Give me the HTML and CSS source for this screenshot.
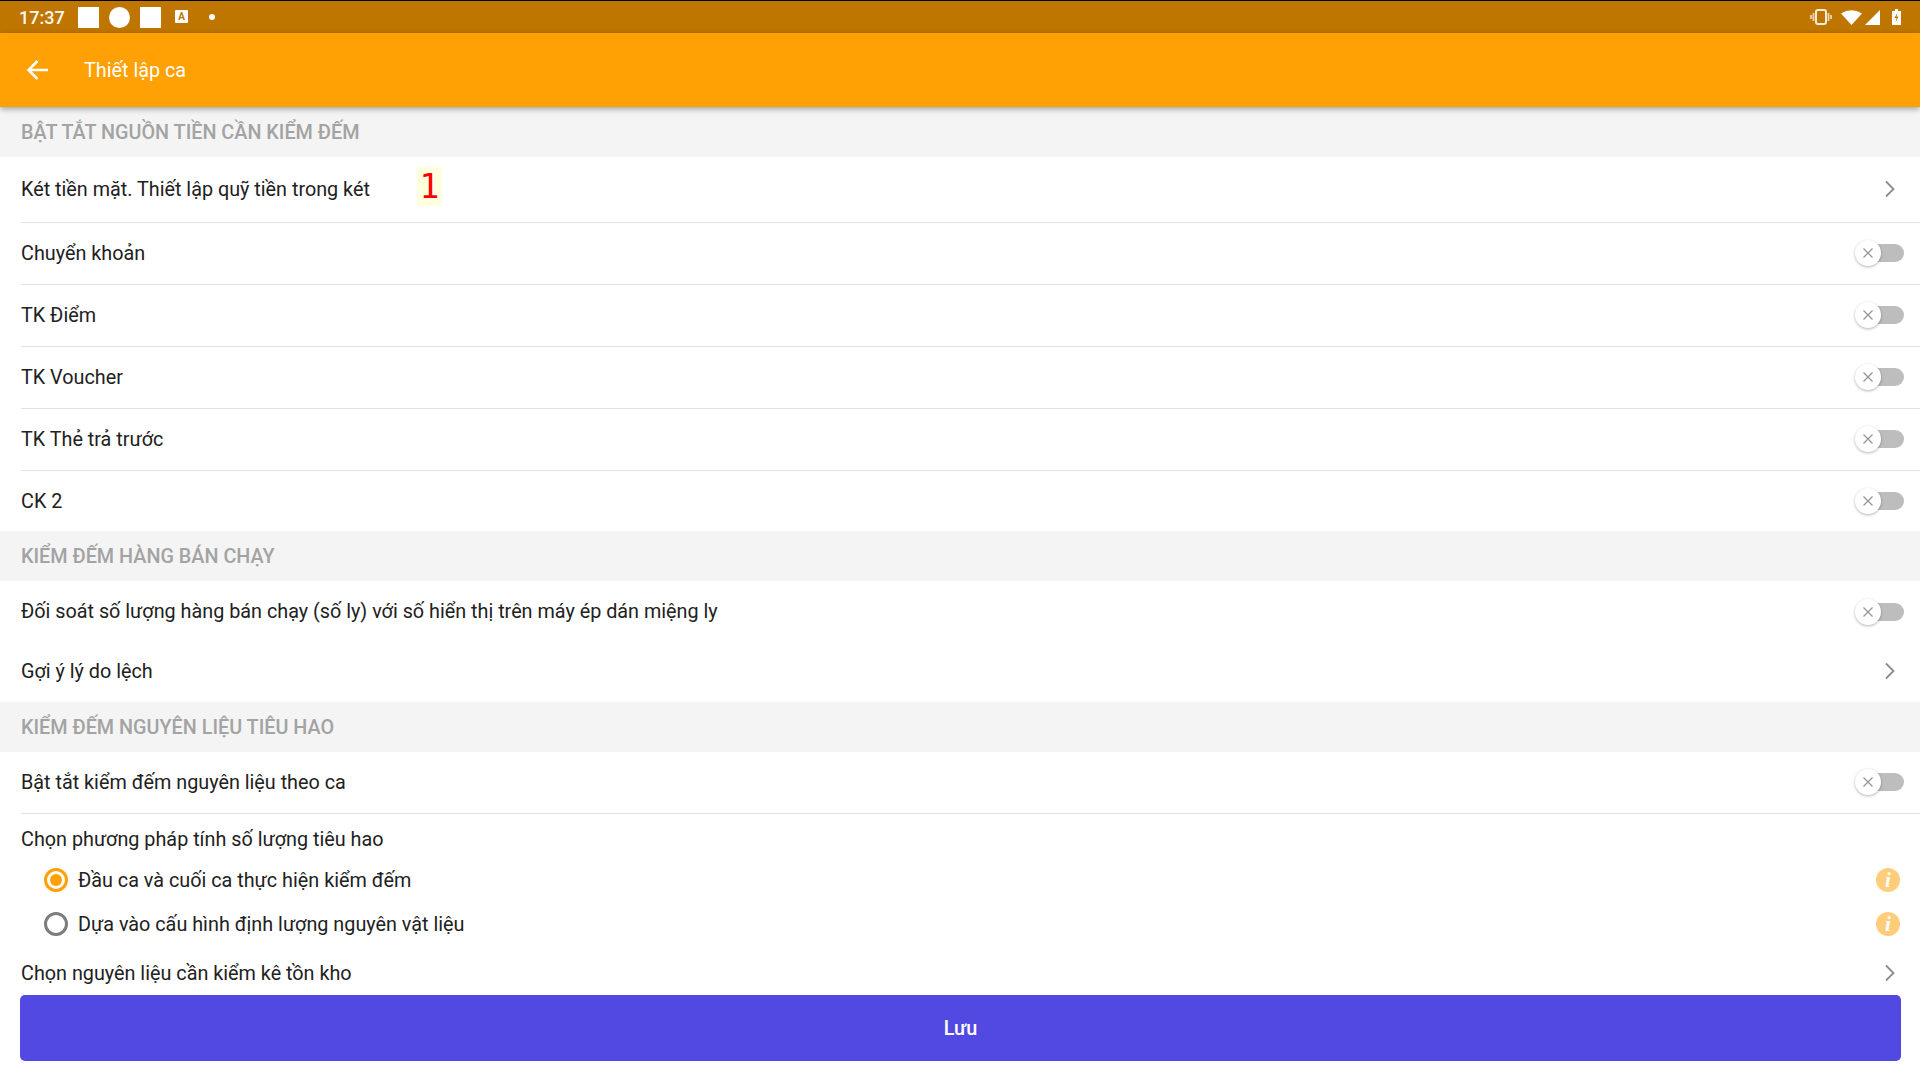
FILE: index.html
```html
<!DOCTYPE html>
<html lang="vi">
<head>
<meta charset="utf-8">
<title>Thiết lập ca</title>
<link rel="stylesheet" href="styles.css">
</head>
<body>
<svg class="defs" width="0" height="0">
  <symbol id="x" viewBox="0 0 12 12"><path d="M1.500 1.500l9 9M10.500 1.500l-9 9" stroke="#969696" stroke-width="1.300" fill="none"/></symbol>
  <symbol id="chev" viewBox="0 0 12 18"><path d="M2 1.500 9.500 9 2 16.500" fill="none" stroke="#8c8c8c" stroke-width="1.800"/></symbol>
</svg>
<div class="screen">
  <div class="status">
    <span class="time">17:37</span>
    <span class="sq"></span><span class="sq round"></span><span class="sq"></span>
    <svg class="s-a" viewBox="0 0 14 14" width="14" height="14"><rect width="13" height="13" rx="1" fill="#fff"/><text x="6.5" y="9.5" class="a-glyph">A</text></svg>
    <span class="dot"></span>
    <span class="status-right">
      <svg width="22" height="16" viewBox="0 0 22 16"><rect x="6" y="1" width="10" height="14" rx="2" fill="none" stroke="#fff" stroke-width="2" opacity=".85"/><path d="M3.500 4v8M1 6v4M18.500 4v8M21 6v4" stroke="#fff" stroke-width="1.800" opacity=".7"/></svg>
      <svg class="wifi" width="21" height="15" viewBox="0 0 21 15"><path d="M0 3.500Q10.500-3 21 3.500L10.500 15Z" fill="#fff"/></svg>
      <svg class="signal" width="15" height="15" viewBox="0 0 15 15"><path d="M15 0V15H0Z" fill="#fff"/></svg>
      <svg class="batt" width="9" height="16" viewBox="0 0 9 16"><path d="M3 0h3v2h3v14H0V2h3Z" fill="#fff"/><path d="M5.500 3.500 2.500 9H4.500l-1 4.500 3-6H4.500Z" fill="#bf7600"/></svg>
    </span>
  </div>
  <header class="appbar">
    <svg class="back" width="24" height="24" viewBox="0 0 24 24"><path d="M23 12H4M12.500 3l-9 9 9 9" fill="none" stroke="#fff" stroke-width="2.600"/></svg>
    <span class="title">Thiết lập ca</span>
  </header>
  <main class="content">
    <div class="section">BẬT TẮT NGUỒN TIỀN CẦN KIỂM ĐẾM</div>
    <div class="row h66 line">
      <span class="label">Két tiền mặt. Thiết lập quỹ tiền trong két</span>
      <span class="badge">1</span>
      <svg class="chev" width="12" height="18"><use href="#chev"/></svg>
    </div>
    <div class="row h62 line"><span class="label">Chuyển khoản</span><span class="toggle"><span class="knob"><svg width="12" height="12"><use href="#x"/></svg></span></span></div>
    <div class="row h62 line"><span class="label">TK Điểm</span><span class="toggle"><span class="knob"><svg width="12" height="12"><use href="#x"/></svg></span></span></div>
    <div class="row h62 line"><span class="label">TK Voucher</span><span class="toggle"><span class="knob"><svg width="12" height="12"><use href="#x"/></svg></span></span></div>
    <div class="row h62 line"><span class="label">TK Thẻ trả trước</span><span class="toggle"><span class="knob"><svg width="12" height="12"><use href="#x"/></svg></span></span></div>
    <div class="row h60 flat"><span class="label">CK 2</span><span class="toggle"><span class="knob"><svg width="12" height="12"><use href="#x"/></svg></span></span></div>
    <div class="section">KIỂM ĐẾM HÀNG BÁN CHẠY</div>
    <div class="row h61 flat"><span class="label">Đối soát số lượng hàng bán chạy (số ly) với số hiển thị trên máy ép dán miệng ly</span><span class="toggle"><span class="knob"><svg width="12" height="12"><use href="#x"/></svg></span></span></div>
    <div class="row h60">
      <span class="label">Gợi ý lý do lệch</span>
      <svg class="chev" width="12" height="18"><use href="#chev"/></svg>
    </div>
    <div class="section">KIỂM ĐẾM NGUYÊN LIỆU TIÊU HAO</div>
    <div class="row h62 line"><span class="label">Bật tắt kiểm đếm nguyên liệu theo ca</span><span class="toggle"><span class="knob"><svg width="12" height="12"><use href="#x"/></svg></span></span></div>
    <div class="group-title">Chọn phương pháp tính số lượng tiêu hao</div>
    <div class="radio-row"><span class="radio on"></span><span class="label">Đầu ca và cuối ca thực hiện kiểm đếm</span><span class="info">i</span></div>
    <div class="radio-row"><span class="radio"></span><span class="label">Dựa vào cấu hình định lượng nguyên vật liệu</span><span class="info">i</span></div>
    <div class="row last">
      <span class="label">Chọn nguyên liệu cần kiểm kê tồn kho</span>
      <svg class="chev" width="12" height="18"><use href="#chev"/></svg>
    </div>
  </main>
  <div class="footer"><button class="save">Lưu</button></div>
</div>
</body>
</html>
```

FILE: styles.css
```css
* { box-sizing: border-box; }
html, body { margin: 0; padding: 0; }
body { font-family: Roboto, "Noto Sans", sans-serif; background: #fff; color: #212121; }
.defs { position: absolute; }
.screen { width: 1920px; height: 1079px; display: flex; flex-direction: column; overflow: hidden; }

.status { height: 33px; flex: none; background: #bf7600; border-top: 1px solid #000; display: flex; align-items: center; padding-left: 19px; color: #fff; }
.time { font-size: 18px; font-weight: 500; width: 59px; opacity: .95; }
.sq { width: 21px; height: 21px; background: #fff; margin-right: 10px; flex: none; }
.round { border-radius: 50%; }
.s-a { margin-left: 4px; flex: none; }
.a-glyph { font: 700 10px Roboto, sans-serif; fill: #bf7600; text-anchor: middle; }
.dot { width: 6px; height: 6px; border-radius: 50%; background: #fff; margin-left: 20px; }
.status-right { margin-left: auto; display: flex; align-items: center; padding-right: 19px; }
.wifi { margin-left: 9px; }
.signal { margin-left: 3px; }
.batt { margin-left: 12px; }

.appbar { height: 74px; flex: none; background: #ffa005; display: flex; align-items: center; padding-left: 25px; box-shadow: 0 2px 6px rgba(0,0,0,.35); position: relative; z-index: 1; color: #fff; }
.title { font-size: 19.8px; margin-left: 35px; }

.content { flex: 1; display: flex; flex-direction: column; min-height: 0; }
.section { height: 50px; flex: none; background: #f4f4f4; color: #a3a3a3; font-size: 19.8px; font-weight: 500; display: flex; align-items: center; padding-left: 21px; }
.row { flex: none; display: flex; align-items: center; padding: 0 16px 2px 21px; position: relative; }
.flat { padding-bottom: 0; }
.label { font-size: 19.8px; color: #212121; }
.line::after { content: ""; position: absolute; left: 21px; right: 0; bottom: 0; height: 1px; background: #e2e2e2; }
.h66 { height: 66px; }
.h62 { height: 62px; }
.h61 { height: 61px; }
.h60 { height: 60px; }
.last { height: 49px; padding-top: 5px; padding-bottom: 0; }
.chev { margin-left: auto; margin-right: 8px; }
.badge { width: 25px; height: 39px; background: #ffffe0; color: #f00; font-family: "DejaVu Sans Mono", monospace; font-size: 33px; display: flex; align-items: center; justify-content: center; margin-left: 47px; margin-top: -6px; }

.toggle { margin-left: auto; width: 44px; height: 18px; background: #bdbdbd; border-radius: 9px; position: relative; display: block; flex: none; }
.knob { position: absolute; left: -5px; top: -4px; width: 26px; height: 26px; border-radius: 50%; background: #fff; box-shadow: 0 1px 3px rgba(0,0,0,.3); display: flex; align-items: center; justify-content: center; }

.group-title { height: 44px; flex: none; font-size: 19.8px; padding: 14px 0 0 21px; line-height: 24px; }
.radio-row { height: 44px; flex: none; display: flex; align-items: center; padding: 0 20px 0 44px; }
.radio { width: 24px; height: 24px; border: 3px solid #7d7d7d; border-radius: 50%; margin-right: 10px; flex: none; }
.radio.on { border-color: #ffa005; position: relative; }
.radio.on::after { content: ""; position: absolute; inset: 3px; border-radius: 50%; background: #ffa005; }
.info { margin-left: auto; width: 24px; height: 24px; border-radius: 50%; background: #ffcd7a; color: #fff; font: italic 700 21px/24px "Liberation Serif", serif; text-align: center; }

.footer { flex: none; padding: 0 19px 18px 20px; background: transparent; }
.save { width: 100%; height: 66px; border: 0; border-radius: 5px; background: #5249e2; color: #fff; font: 500 19.8px Roboto, sans-serif; display: block; }
```
